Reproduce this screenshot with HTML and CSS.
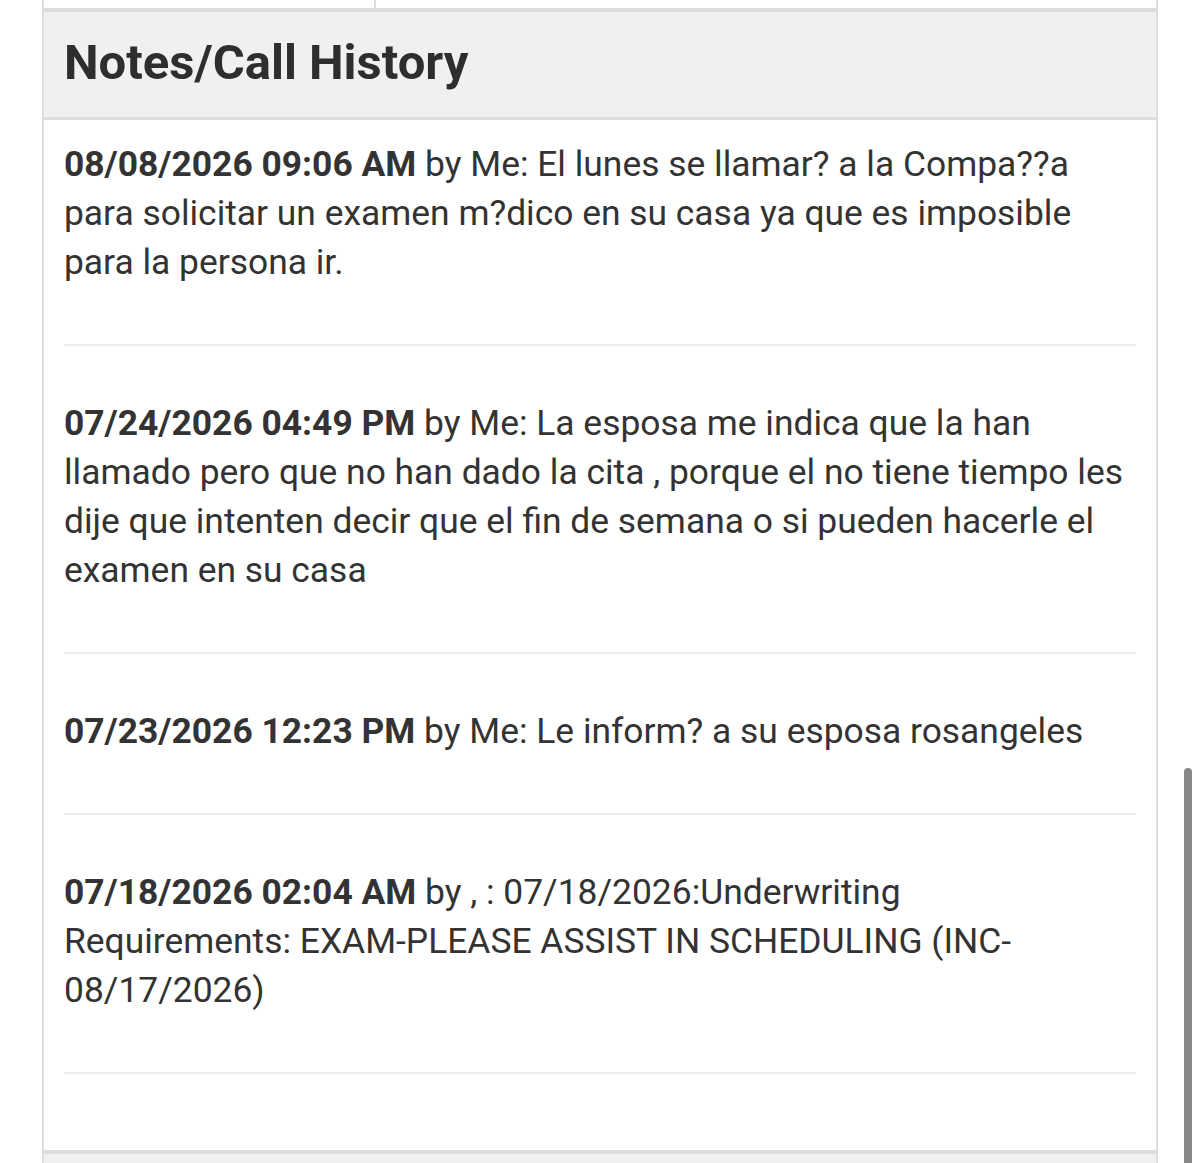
FILE: index.html
```html
<!DOCTYPE html>
<html lang="es">
<head>
  <meta charset="UTF-8" />
  <meta name="viewport" content="width=device-width, initial-scale=1.0" />
  <title>Notes/Call History</title>
  <link rel="stylesheet" href="styles.css">
</head>
<body>
  <div class="page">
    <div class="panel panel-top">
      <div class="cell cell-left"></div>
      <div class="cell"></div>
    </div>

    <div class="panel notes">
      <div class="panel-heading">
        <h2>Notes/Call History</h2>
      </div>
      <div class="panel-body">
        <p class="note"><strong>08/08/2026 09:06 AM</strong> by Me: El lunes se llamar? a la Compa??a para solicitar un examen m?dico en su casa ya que es imposible para la persona ir.</p>
        <hr>
        <p class="note"><strong>07/24/2026 04:49 PM</strong> by Me: La esposa me indica que la han llamado pero que no han dado la cita , porque el no tiene tiempo les dije que intenten decir que el fin de semana o si pueden hacerle el examen en su casa</p>
        <hr>
        <p class="note"><strong>07/23/2026 12:23 PM</strong> by Me: Le inform? a su esposa rosangeles</p>
        <hr>
        <p class="note"><strong>07/18/2026 02:04 AM</strong> by , : 07/18/2026:Underwriting Requirements: EXAM-PLEASE ASSIST IN SCHEDULING (INC-08/17/2026)</p>
        <hr>
      </div>
    </div>

    <div class="panel panel-next"></div>
  </div>

  <div class="scroll-thumb"></div>
</body>
</html>
```

FILE: styles.css
```css
* {
  box-sizing: border-box;
}
body {
  font-family: Roboto, "Helvetica Neue", Arial, sans-serif;
  background-color: #fff;
  color: #333;
  margin: 0;
  overflow: hidden;
}
.page {
  width: 1116px;
  margin-left: 42px;
}
.panel {
  border-left: 2px solid #ddd;
  border-right: 2px solid #ddd;
  background-color: #fff;
}
.panel-top {
  display: flex;
  height: 12px;
  border-bottom: 4px solid #ddd;
}
.cell {
  flex: 1;
}
.cell-left {
  flex: 0 0 332px;
  border-right: 2px solid #ddd;
}
.panel-heading {
  background-color: #f0f0f0;
  height: 108px;
  padding: 0 20px;
  border-bottom: 3px solid #ddd;
  display: flex;
  align-items: center;
}
.panel-heading h2 {
  margin: 0 0 4px;
  font-size: 49px;
  font-weight: bold;
  color: #2e2e2e;
}
.panel-body {
  padding: 20px 20px 22px;
}
.note {
  margin: 0;
  font-size: 35.4px;
  line-height: 49px;
}
hr {
  border: none;
  height: 2px;
  background-color: #eee;
  margin: 57px 0 53px;
}
.panel-body hr:last-child {
  margin-bottom: 54px;
}
.panel-next {
  height: 40px;
  border-top: 4px solid #ddd;
  background-color: #f0f0f0;
}
.scroll-thumb {
  position: fixed;
  right: 8px;
  top: 768px;
  width: 8px;
  height: 420px;
  border-radius: 4px;
  background-color: #888;
}
```
